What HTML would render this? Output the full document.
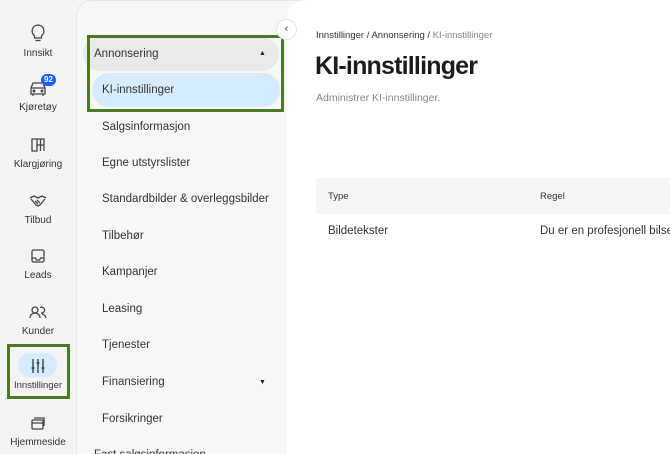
<!DOCTYPE html>
<html><head><meta charset="utf-8"><style>
*{box-sizing:border-box;margin:0;padding:0}
html,body{width:670px;height:454px;overflow:hidden}
body{background:#f4f4f4;font-family:"Liberation Sans",sans-serif;color:#222;position:relative}
.rail{position:absolute;left:0;top:0;width:76px;height:454px;background:#f4f4f4}
.ri{position:absolute;left:0;width:76px;text-align:center;font-size:10px;color:#333}
.ri svg{display:block;margin:0 auto 5px}
.sub{position:absolute;left:76px;top:0;width:230px;height:454px;background:#f7f7f7;border-left:1px solid #e6e6e6;border-top-left-radius:16px;border-top:1px solid #e6e6e6}
.main{position:absolute;left:287px;top:0;width:383px;height:454px;background:#fff;border-top-left-radius:18px}
.it{position:absolute;left:102px;font-size:11.5px;color:#333}
</style></head><body>
<div class="rail">
 <div class="ri" style="top:23px"><svg width="18" height="20" viewBox="0 0 18 20" fill="none" stroke="#444" stroke-width="1.3"><path d="M9 2a6 6 0 0 0-3.5 10.8V15h7v-2.2A6 6 0 0 0 9 2z"/><path d="M6.5 17.5h5"/></svg>Innsikt</div>
 <div class="ri" style="top:79px"><svg width="20" height="18" viewBox="0 0 20 18" fill="none" stroke="#444" stroke-width="1.3"><path d="M3 9l2-5h10l2 5v6H3z"/><path d="M3 9h14M5 15v2M15 15v2"/><circle cx="6" cy="12" r=".8"/><circle cx="14" cy="12" r=".8"/></svg>Kjøretøy
  <span style="position:absolute;left:41px;top:-5px;background:#1a5cff;color:#fff;font-size:8px;font-weight:bold;border-radius:7px;padding:1px 3px;line-height:10px">92</span></div>
 <div class="ri" style="top:136px"><svg width="18" height="18" viewBox="0 0 18 18" fill="none" stroke="#444" stroke-width="1.3"><path d="M3 3h5v12H3zM8 3h7v6H8zM11.5 3v12M8 9h7v6"/></svg>Klargjøring</div>
 <div class="ri" style="top:192px"><svg width="20" height="18" viewBox="0 0 20 18" fill="none" stroke="#444" stroke-width="1.3"><path d="M2 6l4-2 4 2 4-2 4 2M3 7l5 6 2 1 2-1 5-6M7 9l3 3M9 8l3 3"/></svg>Tilbud</div>
 <div class="ri" style="top:247px"><svg width="18" height="18" viewBox="0 0 18 18" fill="none" stroke="#444" stroke-width="1.3"><rect x="3" y="3" width="12" height="12" rx="1.5"/><path d="M3 11h3.5l1 2h3l1-2H15"/></svg>Leads</div>
 <div class="ri" style="top:303px"><svg width="20" height="18" viewBox="0 0 20 18" fill="none" stroke="#444" stroke-width="1.3"><circle cx="7" cy="7" r="3"/><path d="M2 15a5 5 0 0 1 10 0"/><path d="M12 4.5a3 3 0 1 1 1 5.5M14 11a5 5 0 0 1 4 4"/></svg>Kunder</div>
 <div style="position:absolute;left:7px;top:344px;width:63px;height:55px;border:3px solid #4a7a25"></div>
 <div style="position:absolute;left:18px;top:353px;width:39px;height:24px;background:#d6ebfd;border-radius:12px"></div>
 <div class="ri" style="top:357px;font-size:9.5px"><svg width="18" height="18" viewBox="0 0 18 18" fill="none" stroke="#333" stroke-width="1.3"><path d="M4 2v14M9 2v14M14 2v14M2.5 11h3M7.5 6h3M12.5 11h3"/></svg>Innstillinger</div>
 <div class="ri" style="top:414px"><svg width="18" height="18" viewBox="0 0 18 18" fill="none" stroke="#444" stroke-width="1.3"><rect x="3" y="6" width="11" height="9" rx="1"/><path d="M5 4h10v8M3 9h11"/></svg>Hjemmeside</div>
</div>
<div class="sub">
 <div style="position:absolute;left:6px;top:36px;width:196px;height:34px;background:#e9e9e9;border-radius:17px"></div>
 <div style="position:absolute;left:17px;top:47px;font-size:11.5px;color:#333">Annonsering</div>
 <div style="position:absolute;left:182px;top:49px;font-size:7px">▲</div>
 <div style="position:absolute;left:15px;top:72px;width:188px;height:34px;background:#d6ebfd;border-radius:17px"></div>
 <div style="position:absolute;left:10px;top:34px;width:197px;height:77px;border:3px solid #4a7a25"></div>
</div>
<div class="it" style="top:84px">KI-innstillinger</div>
<div class="it" style="top:121px">Salgsinformasjon</div>
<div class="it" style="top:157px">Egne utstyrslister</div>
<div class="it" style="top:193px">Standardbilder &amp; overleggsbilder</div>
<div class="it" style="top:230px">Tilbehør</div>
<div class="it" style="top:266px">Kampanjer</div>
<div class="it" style="top:303px">Leasing</div>
<div class="it" style="top:339px">Tjenester</div>
<div class="it" style="top:376px">Finansiering</div>
<div style="position:absolute;left:259px;top:379px;font-size:7px">▼</div>
<div class="it" style="top:413px">Forsikringer</div>
<div class="it" style="top:449px;left:94px">Fast salgsinformasjon</div>
<div class="main">
 <div style="position:absolute;left:29px;top:30px;font-size:9.5px;color:#333">Innstillinger / Annonsering / <span style="color:#888">KI-innstillinger</span></div>
 <div style="position:absolute;left:28px;top:52px;font-size:25px;font-weight:bold;color:#1c1c1c;letter-spacing:-0.8px">KI-innstillinger</div>
 <div style="position:absolute;left:29px;top:92px;font-size:10.5px;color:#888">Administrer KI-innstillinger.</div>
 <div style="position:absolute;left:29px;top:178px;width:360px;height:36px;background:#f5f5f5;border-radius:3px"></div>
 <div style="position:absolute;left:41px;top:191px;font-size:9.5px;color:#333">Type</div>
 <div style="position:absolute;left:253px;top:191px;font-size:9.5px;color:#333">Regel</div>
 <div style="position:absolute;left:41px;top:225px;font-size:11.5px;color:#333">Bildetekster</div>
 <div style="position:absolute;left:253px;top:225px;font-size:11.5px;color:#333;white-space:nowrap">Du er en profesjonell bilselger</div>
</div>
<div style="position:absolute;left:276px;top:19px;width:21px;height:21px;border-radius:50%;background:#fff;border:1px solid #e3e3e3;text-align:center;font-size:11px;line-height:18px;color:#555">‹</div>
</body></html>
